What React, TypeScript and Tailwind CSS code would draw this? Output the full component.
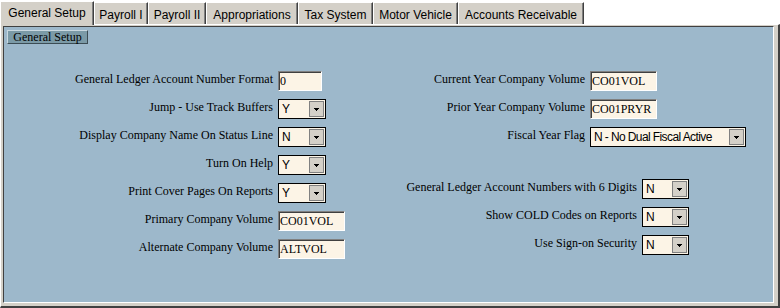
const tabs = [
  { label: "Payroll I", w: "w-[54px]" },
  { label: "Payroll II", w: "w-[58px]" },
  { label: "Appropriations", w: "w-[92px]" },
  { label: "Tax System", w: "w-[75px]" },
  { label: "Motor Vehicle", w: "w-[85px]" },
  { label: "Accounts Receivable", w: "w-[126px]" },
];

const serif = "font-['Liberation_Serif',serif]";
const sans = "font-['Liberation_Sans',Arial,sans-serif]";

function Arrow() {
  return (
    <svg width="5" height="3" viewBox="0 0 5 3" shapeRendering="crispEdges">
      <path d="M0 0h5v1h-5z M1 1h3v1h-3z M2 2h1v1h-1z" fill="#000" />
    </svg>
  );
}

function Select({ value, width }: { value: string; width: string }) {
  return (
    <div
      className={`${width} h-[20px] flex items-center border border-black bg-[#fcf4e6] ${sans}`}
    >
      <span className="flex-1 pl-[3px] text-[12px] tracking-[-0.6px] leading-none text-black whitespace-nowrap overflow-hidden">
        {value}
      </span>
      <div className="w-[15px] h-[16px] mr-[1px] flex items-center justify-center border border-[#808080] bg-[#d4d0c8]">
        <Arrow />
      </div>
    </div>
  );
}

function TextBox({ value, width }: { value: string; width: string }) {
  return (
    <div
      className={`${width} h-[20px] flex items-center pl-[1px] border border-t-[#808080] border-l-[#808080] border-b-white border-r-white shadow-[inset_1px_1px_0_#404040] bg-[#fcf4e6] text-[12px] text-black ${serif}`}
    >
      {value}
    </div>
  );
}

function Label({ text }: { text: string }) {
  return (
    <div
      className={`h-[20px] text-right whitespace-nowrap text-[12px] leading-[16px] text-black ${serif}`}
    >
      {text}
    </div>
  );
}

export default function App() {
  return (
    <div className="w-[780px] h-[308px] bg-white overflow-hidden">
      {/* tab strip */}
      <div className={`flex items-end h-[24px] ${sans} text-[12px] text-black`}>
        <div className="relative z-10 w-[94px] h-[24px] -mb-[1px] pt-[4px] text-center leading-[14px] bg-[#d4d0c8] border-t border-l border-t-white border-l-white border-r border-r-[#404040] shadow-[inset_-1px_0_0_#808080]">
          General Setup
        </div>
        {tabs.map((t) => (
          <div
            key={t.label}
            className={`${t.w} h-[22px] pt-[5px] text-center leading-[14px] whitespace-nowrap bg-[#d4d0c8] border-t border-l border-t-white border-l-white border-r border-r-[#404040] shadow-[inset_-1px_0_0_#808080]`}
          >
            {t.label}
          </div>
        ))}
      </div>

      {/* panel frame */}
      <div className="h-[284px] bg-[#d4d0c8] border-t border-l border-t-white border-l-white border-r-2 border-b-2 border-r-[#404040] border-b-[#404040] pt-[1px] pl-[2px] pr-[4px] pb-[3px]">
        <div className="h-full bg-[#9db8cb] border border-t-[#404040] border-l-[#404040] border-b-white border-r-white">
          <div className="pl-[3px] pt-[3px]">
            <div
              className={`w-[81px] h-[14px] flex items-center justify-center bg-[#7b9aa7] border border-t-[#c9d8e0] border-l-[#c9d8e0] border-b-[#3c4c54] border-r-[#3c4c54] text-[12px] leading-none text-black ${serif}`}
            >
              General Setup
            </div>
          </div>

          <div className="flex items-start mt-[27px] ml-[66px]">
            {/* left column */}
            <div className="grid grid-cols-[203px_67px] gap-x-[5px] gap-y-[8px]">
              <Label text="General Ledger Account Number Format" />
              <TextBox value="0" width="w-[44px]" />
              <Label text="Jump - Use Track Buffers" />
              <Select value="Y" width="w-[48px]" />
              <Label text="Display Company Name On Status Line" />
              <Select value="N" width="w-[48px]" />
              <Label text="Turn On Help" />
              <Select value="Y" width="w-[48px]" />
              <Label text="Print Cover Pages On Reports" />
              <Select value="Y" width="w-[48px]" />
              <Label text="Primary Company Volume" />
              <TextBox value="CO01VOL" width="w-[67px]" />
              <Label text="Alternate Company Volume" />
              <TextBox value="ALTVOL" width="w-[67px]" />
            </div>

            {/* right column */}
            <div className="ml-[55px] flex flex-col">
              <div className="grid grid-cols-[185px_auto] gap-x-[5px] gap-y-[8px]">
                <Label text="Current Year Company Volume" />
                <TextBox value="CO01VOL" width="w-[67px]" />
                <Label text="Prior Year Company Volume" />
                <TextBox value="CO01PRYR" width="w-[67px]" />
                <Label text="Fiscal Year Flag" />
                <Select value="N - No Dual Fiscal Active" width="w-[156px]" />
              </div>
              <div className="mt-[32px] grid grid-cols-[237px_auto] gap-x-[5px] gap-y-[8px]">
                <Label text="General Ledger Account Numbers with 6 Digits" />
                <Select value="N" width="w-[47px]" />
                <Label text="Show COLD Codes on Reports" />
                <Select value="N" width="w-[47px]" />
                <Label text="Use Sign-on Security" />
                <Select value="N" width="w-[47px]" />
              </div>
            </div>
          </div>
        </div>
      </div>
    </div>
  );
}
